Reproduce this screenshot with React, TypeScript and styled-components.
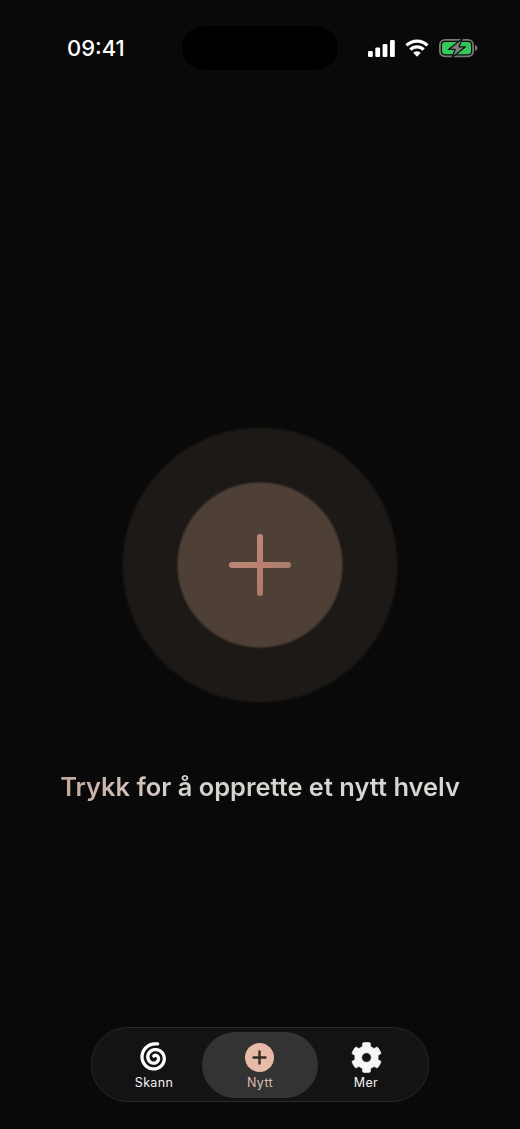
import styled, { createGlobalStyle } from "styled-components";
import { FaCog } from "react-icons/fa";

const GlobalStyle = createGlobalStyle`
  html, body {
    margin: 0;
    padding: 0;
    background: #090909;
  }
  body {
    font-family: Inter, "Liberation Sans", sans-serif;
  }
`;

// spiral runs from the centre out to the open end at the top
const spiralPath = () => {
  const points: string[] = [];
  const turns = 2.1;
  const steps = 120;
  for (let i = 0; i <= steps; i++) {
    const t = i / steps;
    const r = 2 + t * 12.2;
    const angle = -1.35 - (1 - t) * turns * Math.PI * 2;
    const x = 16.6 + Math.cos(angle) * r;
    const y = 16.8 + Math.sin(angle) * r;
    points.push(`${x.toFixed(2)} ${y.toFixed(2)}`);
  }
  return `M${points.join("L")}`;
};

const SignalIcon = () => (
  <svg width="27" height="17" viewBox="0 0 27 17">
    <rect x="0" y="11" width="4.8" height="6" rx="1.2" fill="#fff" />
    <rect x="7.3" y="7.5" width="4.8" height="9.5" rx="1.2" fill="#fff" />
    <rect x="14.6" y="4" width="4.8" height="13" rx="1.2" fill="#fff" />
    <rect x="22" y="0" width="4.8" height="17" rx="1.2" fill="#fff" />
  </svg>
);

const WifiIcon = () => (
  <svg width="24" height="18" viewBox="0 0 24 18" fill="none" stroke="#fff" strokeWidth="3.2">
    <path d="M1.5 6.4a15 15 0 0 1 21 0" />
    <path d="M5.4 10.6a9.4 9.4 0 0 1 13.2 0" />
    <path d="M12 17.8 8.2 13.8a5.2 5.2 0 0 1 7.6 0Z" fill="#fff" stroke="none" />
  </svg>
);

const BatteryIcon = () => (
  <svg width="39" height="20" viewBox="0 0 39 20" fill="none">
    <rect x="0.9" y="1.9" width="33.2" height="16.4" rx="5" stroke="#77797a" strokeWidth="1.8" />
    <rect x="3" y="4" width="29" height="12.2" rx="3.2" fill="#34c759" />
    <path d="M36 7c1.6.4 2.4 1.6 2.4 3s-.8 2.6-2.4 3Z" fill="#77797a" />
    <path
      d="M23.5 0.6 9.5 11.4h6.6L13 19.6 26.5 8.8h-6.4Z"
      fill="#7c7e7c"
      stroke="#141414"
      strokeWidth="1.3"
      strokeLinejoin="round"
    />
  </svg>
);

const SpiralIcon = () => (
  <svg width="32" height="32" viewBox="0 0 32 32" fill="none" overflow="visible">
    <path d={spiralPath()} stroke="#fff" strokeWidth="3.3" strokeLinecap="round" strokeLinejoin="round" />
  </svg>
);

const SmallPlus = () => (
  <svg width="15" height="15" viewBox="0 0 15 15" fill="none" stroke="#352b27" strokeWidth="2.4" strokeLinecap="round">
    <path d="M7.5 1.5v12M1.5 7.5h12" />
  </svg>
);

const App = () => {
  return (
    <Screen>
      <GlobalStyle />
      <StatusBar>
        <Time>09:41</Time>
        <Island />
        <StatusIcons>
          <SignalIcon />
          <WifiIcon />
          <BatteryIcon />
        </StatusIcons>
      </StatusBar>
      <Main>
        <OuterCircle>
          <InnerCircle>
            <PlusIcon />
          </InnerCircle>
        </OuterCircle>
        <Prompt>Trykk for å opprette et nytt hvelv</Prompt>
      </Main>
      <TabBar>
        <Tab>
          <IconSlot>
            <SpiralIcon />
          </IconSlot>
          <TabLabel>Skann</TabLabel>
        </Tab>
        <ActiveTab>
          <IconSlot>
            <PlusBadge>
              <SmallPlus />
            </PlusBadge>
          </IconSlot>
          <TabLabel $active>Nytt</TabLabel>
        </ActiveTab>
        <Tab>
          <IconSlot>
            <GearIcon size={31} color="#f6f6f6" />
          </IconSlot>
          <TabLabel>Mer</TabLabel>
        </Tab>
      </TabBar>
    </Screen>
  );
};

const Screen = styled.div`
  display: flex;
  flex-direction: column;
  height: 1129px;
  overflow: hidden;
  background: #090909;
`;

const StatusBar = styled.div`
  display: grid;
  grid-template-columns: 1fr 156px 1fr;
  align-items: center;
  height: 44px;
  padding: 26px 0 26px;
  flex: none;
`;

const Time = styled.span`
  padding-left: 67px;
  font-size: 22px;
  font-weight: 500;
  color: #fff;
`;

const Island = styled.div`
  height: 44px;
  border-radius: 22px;
  background: #000;
`;

const StatusIcons = styled.div`
  display: flex;
  align-items: center;
  justify-content: flex-end;
  gap: 10px;
  padding-right: 42px;
`;

const Main = styled.main`
  display: flex;
  flex: 1;
  flex-direction: column;
  align-items: center;
  padding-top: 332px;
`;

const OuterCircle = styled.div`
  display: flex;
  align-items: center;
  justify-content: center;
  width: 278px;
  height: 278px;
  margin: -2px 0;
  border-radius: 50%;
  background: radial-gradient(closest-side, #1d1916 97.5%, rgba(29, 25, 22, 0) 100%);
`;

const InnerCircle = styled.div`
  display: flex;
  align-items: center;
  justify-content: center;
  width: 168px;
  height: 168px;
  border-radius: 50%;
  background: radial-gradient(closest-side, #4f4037 96.5%, rgba(79, 64, 55, 0) 100%);
`;

const PlusIcon = styled.div`
  position: relative;
  width: 62px;
  height: 62px;

  &::before,
  &::after {
    content: "";
    position: absolute;
    border-radius: 3px;
  }
  &::before {
    left: 0;
    right: 0;
    top: 28px;
    height: 6px;
    background: linear-gradient(90deg, #b98776, #bb8171 50%, #a97d6c);
  }
  &::after {
    top: 0;
    bottom: 0;
    left: 28px;
    width: 6px;
    background: linear-gradient(180deg, #ba8978, #b97f70 50%, #a97b6b);
  }
`;

const Prompt = styled.p`
  margin: 66px 0 0;
  font-size: 25.45px;
  line-height: 38px;
  font-weight: 600;
  color: transparent;
  background: linear-gradient(90deg, #c4a79b 0%, #d6d2ce 30%, #d8d8d4 100%);
  -webkit-background-clip: text;
  background-clip: text;
`;

const TabBar = styled.nav`
  display: flex;
  flex: none;
  align-items: center;
  justify-content: center;
  box-sizing: border-box;
  width: 338px;
  height: 75px;
  margin: 0 auto 27px;
  border: 1px solid #2a2a2a;
  border-radius: 37px;
  background: #131313;
`;

const Tab = styled.div`
  display: flex;
  flex-direction: column;
  align-items: center;
  gap: 2px;
  box-sizing: border-box;
  width: 96px;
  height: 66px;
  padding-top: 10px;
`;

const ActiveTab = styled(Tab)`
  width: 116px;
  border-radius: 33px;
  background: #333333;
`;

const IconSlot = styled.div`
  display: flex;
  align-items: center;
  justify-content: center;
  height: 31px;
`;

const GearIcon = styled(FaCog)`
  stroke: #f6f6f6;
  stroke-width: 12px;
`;

const PlusBadge = styled.div`
  display: flex;
  align-items: center;
  justify-content: center;
  width: 29px;
  height: 29px;
  margin-left: -1px;
  border-radius: 50%;
  background: #e8bba8;
`;

const TabLabel = styled.span<{ $active?: boolean }>`
  font-size: 12.5px;
  line-height: 15px;
  font-weight: 400;
  letter-spacing: 0.35px;
  color: ${({ $active }) => ($active ? "#dcbfb1" : "#f2f2f2")};
`;

export default App;
